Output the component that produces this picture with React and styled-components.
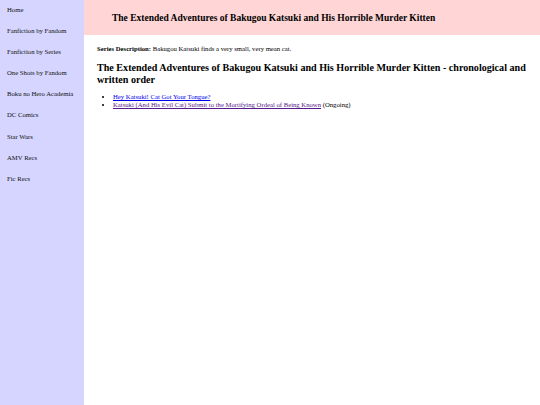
import React from "react";
import styled, { createGlobalStyle } from "styled-components";

const Global = createGlobalStyle`
  html, body { margin: 0; padding: 0; background: #fff; }
  body { font-family: "Liberation Serif", "Times New Roman", serif; color: #000; }
`;

const Page = styled.div`
  display: flex;
  min-height: 405px;
`;

const Sidebar = styled.nav`
  width: 84px;
  flex: none;
  background: #d5d5ff;
  padding-top: 6px;
  display: flex;
  flex-direction: column;
`;

const NavItem = styled.a`
  display: block;
  height: 21.1px;
  padding-left: 7px;
  font-size: 6.7px;
  line-height: 8px;
  color: #111;
  text-decoration: none;
`;

const Main = styled.main`
  flex: 1;
  display: flex;
  flex-direction: column;
`;

const Header = styled.header`
  background: #ffd5d5;
  height: 35px;
  display: flex;
  align-items: center;
  padding-left: 28px;
`;

const Title = styled.h1`
  margin: 0;
  font-size: 9.5px;
  font-weight: bold;
`;

const Content = styled.section`
  padding: 10px 13px;
`;

const Desc = styled.p`
  margin: 0;
  font-size: 6.7px;
  line-height: 8px;
`;

const SeriesHeading = styled.h2`
  margin: 9px 0 8px;
  font-size: 10.1px;
  line-height: 11.5px;
  font-weight: bold;
`;

const List = styled.ul`
  margin: 0;
  padding-left: 16px;
  font-size: 6.7px;
  line-height: 8px;
`;

const Link = styled.a`
  color: ${(p) => (p.$visited ? "#551a8b" : "#0000ee")};
  text-decoration: underline;
`;

const nav = [
  "Home",
  "Fanfiction by Fandom",
  "Fanfiction by Series",
  "One Shots by Fandom",
  "Boku no Hero Academia",
  "DC Comics",
  "Star Wars",
  "AMV Recs",
  "Fic Recs",
];

export default function App() {
  return (
    <>
      <Global />
      <Page>
        <Sidebar>
          {nav.map((n) => (
            <NavItem key={n} href="#">{n}</NavItem>
          ))}
        </Sidebar>
        <Main>
          <Header>
            <Title>The Extended Adventures of Bakugou Katsuki and His Horrible Murder Kitten</Title>
          </Header>
          <Content>
            <Desc>
              <b>Series Description:</b> Bakugou Katsuki finds a very small, very mean cat.
            </Desc>
            <SeriesHeading>
              The Extended Adventures of Bakugou Katsuki and His Horrible Murder Kitten - chronological and written order
            </SeriesHeading>
            <List>
              <li><Link href="#">Hey Katsuki! Cat Got Your Tongue?</Link></li>
              <li><Link href="#" $visited>Katsuki (And His Evil Cat) Submit to the Mortifying Ordeal of Being Known</Link> (Ongoing)</li>
            </List>
          </Content>
        </Main>
      </Page>
    </>
  );
}
